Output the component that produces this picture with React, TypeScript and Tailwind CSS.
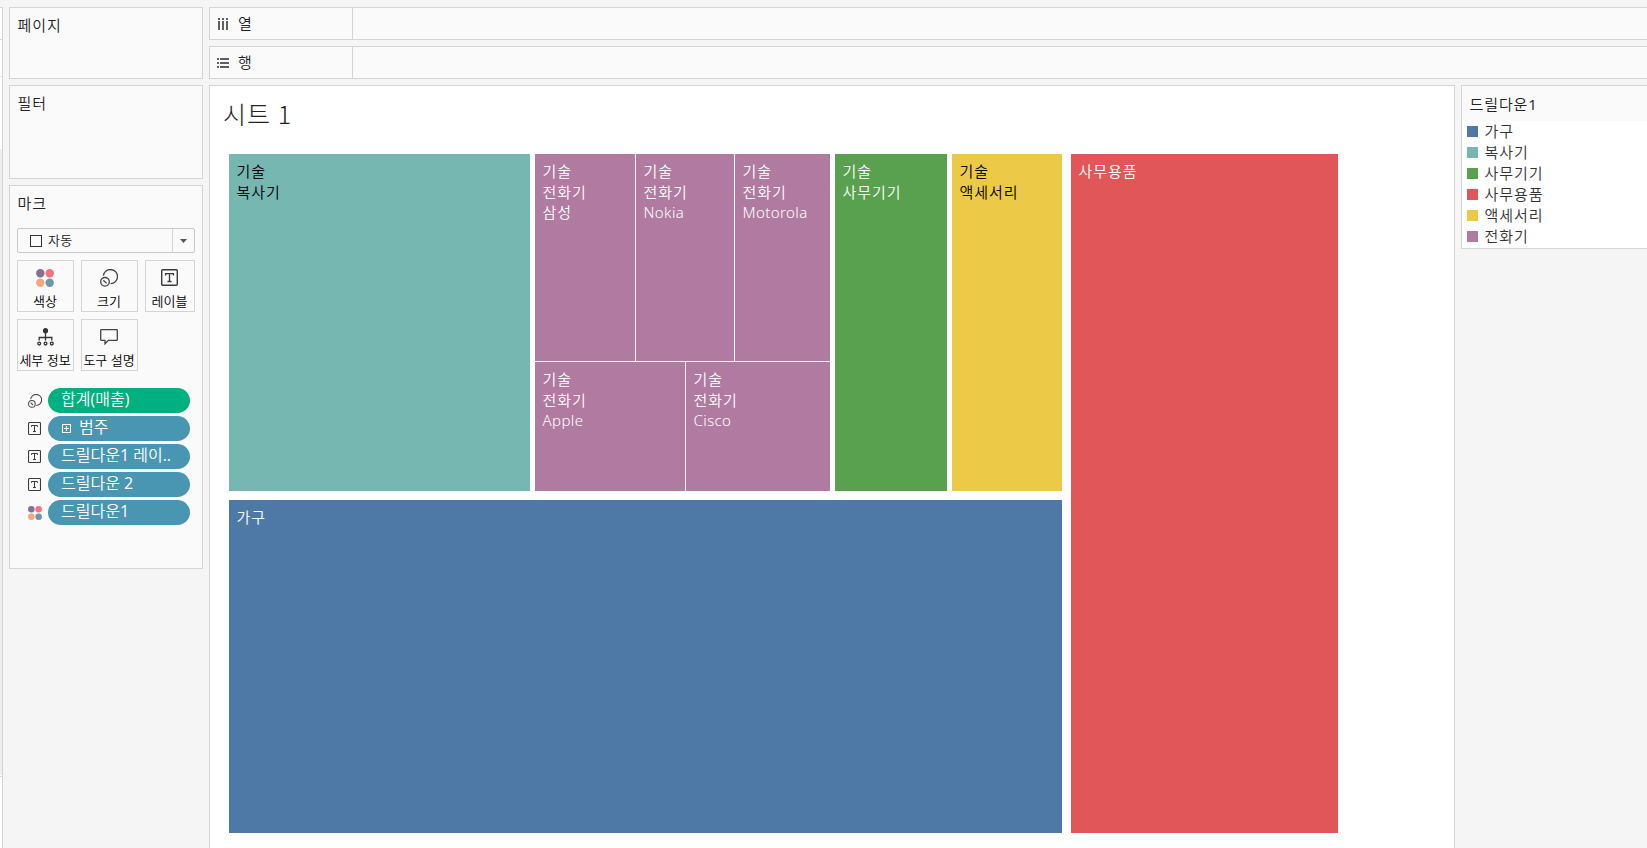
import React from "react";

const UI = "font-['Open_Sans','Noto_Sans_CJK_KR',sans-serif]";
const BOOK = "font-['Noto_Sans','Noto_Sans_CJK_KR',sans-serif]";

// Hangul is set in the demi-light weight; digits and punctuation keep the regular weight.
function Mixed({ text }: { text: string }) {
  return (
    <>
      {text.split(/([0-9().]+)/).map((part, i) =>
        i % 2 ? <span key={i} className="font-normal">{part}</span> : part
      )}
    </>
  );
}

function SizeIcon({ className }: { className: string }) {
  return (
    <svg viewBox="0 0 18 18" className={className} fill="none" stroke="#444" strokeWidth="1.3">
      <path d="M3.4 6.6a7.1 7.1 0 1 1 7.2 8.1" />
      <circle cx="5" cy="12.8" r="4.3" />
      <path d="M3.4 11.2l3.2 3.2" />
    </svg>
  );
}

function LabelIcon({ className }: { className: string }) {
  return (
    <svg viewBox="0 0 17 17" className={className} fill="none" stroke="#3a3a3a">
      <rect x="0.7" y="0.7" width="15.6" height="15.6" rx="1" strokeWidth="1.4" />
      <path d="M4.6 6.4V4.6h7.8v1.8M8.5 4.6v8M6.5 12.5h4" strokeWidth="1.3" />
    </svg>
  );
}

function ColorIcon({ className }: { className: string }) {
  return (
    <svg viewBox="0 0 18 18" className={className}>
      <circle cx="4.3" cy="4.3" r="4.2" fill="#867099" />
      <circle cx="13.7" cy="4.3" r="4.2" fill="#fb6f7e" />
      <circle cx="4.3" cy="13.7" r="4.2" fill="#f4a77c" />
      <circle cx="13.7" cy="13.7" r="4.2" fill="#6f97a6" />
    </svg>
  );
}

function DetailIcon({ className }: { className: string }) {
  return (
    <svg viewBox="0 0 17 18" className={className} fill="none" stroke="#333" strokeWidth="1.3">
      <circle cx="8.5" cy="2.7" r="2.6" fill="#333" stroke="none" />
      <path d="M8.5 4v8.5M2.2 12.5V9.5h12.6v3" />
      <circle cx="2.2" cy="15.6" r="1.4" />
      <circle cx="8.5" cy="15.6" r="1.4" />
      <circle cx="14.8" cy="15.6" r="1.4" />
    </svg>
  );
}

function TooltipIcon({ className }: { className: string }) {
  return (
    <svg viewBox="0 0 18 16" className={className} fill="none" stroke="#444" strokeWidth="1.3">
      <path d="M1.2.7h15.6q.5 0 .5.5v9.6q0 .5-.5.5H8.3L5 14.8v-3.5H1.2q-.5 0-.5-.5V1.2q0-.5.5-.5z" />
    </svg>
  );
}

function MarkButton({ label, width, children }: { label: string; width: string; children: React.ReactNode }) {
  return (
    <button className={`${width} flex h-[52px] flex-col items-center border border-[#d4d4d4] bg-[#fafafa] pr-px pt-[7px]`}>
      <span className="flex h-[19px] items-center">{children}</span>
      <span className="mt-[5px] whitespace-nowrap text-[13px] leading-[18px] text-black">{label}</span>
    </button>
  );
}

function Pill({ color, icon, label, expand }: { color: string; icon: React.ReactNode; label: string; expand?: boolean }) {
  return (
    <div className="flex h-[25px] items-center">
      <span className="flex w-[38px] items-center pl-[18px]">{icon}</span>
      <span className={`${color} flex h-[25px] w-[142px] items-center rounded-full pl-[13px] text-white`}>
        {expand && (
          <svg viewBox="0 0 9 9" className="ml-px mr-[8px] size-[9px]" fill="none" stroke="#fff">
            <rect x="0.5" y="0.5" width="8" height="8" />
            <path d="M2 4.5h5M4.5 2v5" />
          </svg>
        )}
        <span className="whitespace-nowrap pb-[3px] text-[16px] leading-[20px]"><Mixed text={label} /></span>
      </span>
    </div>
  );
}

function Shelf({ label, children }: { label: string; children: React.ReactNode }) {
  return (
    <div className="flex h-[33px] border border-r-0 border-[#d4d4d4] bg-[#fafafa]">
      <div className="flex w-[143px] items-center border-r border-[#d4d4d4] pl-[7px]">
        {children}
        <span className="ml-[8px] pb-px text-[15px] leading-[20px] text-[#222]">{label}</span>
      </div>
    </div>
  );
}

function Tile({ className, lines }: { className: string; lines: string[] }) {
  return (
    <div className={`${className} pl-[7.5px] pt-[7px]`}>
      {lines.map((line) => (
        <div
          key={line}
          className={`whitespace-nowrap text-[15px] leading-[20.6px] ${/[a-z]/i.test(line) ? "tracking-[0.4px]" : "tracking-[0.95px]"}`}
        >
          {line}
        </div>
      ))}
    </div>
  );
}

const legend = [
  { name: "가구", color: "bg-[#4e79a7]" },
  { name: "복사기", color: "bg-[#76b7b2]" },
  { name: "사무기기", color: "bg-[#59a14f]" },
  { name: "사무용품", color: "bg-[#e15759]" },
  { name: "액세서리", color: "bg-[#edc948]" },
  { name: "전화기", color: "bg-[#b07aa1]" },
];

export default function App() {
  return (
    <div className={`${UI} flex h-[848px] w-[1647px] overflow-hidden bg-[#f5f5f5] pt-[7px] font-[350]`}>
      <div className="flex w-[3px] flex-col border-r border-t border-[#d4d4d4] bg-white">
        <div className="h-8 border-b border-[#d4d4d4]" />
        <div className="h-[37px] border-b border-[#e4e4e4]" />
        <div className="h-[72px]" />
        <div className="h-[626px] bg-[#eeeeee]" />
        <div className="h-[2px] border-b border-[#d9d9d9]" />
      </div>

      <aside className="ml-[6px] flex w-[194px] flex-col gap-[6px] text-[#222]">
        <section className="h-[72px] border border-[#d4d4d4] bg-[#fafafa] pl-[7.5px] pt-[7px]">
          <h2 className="text-[15px] leading-[20px] tracking-[1px]">페이지</h2>
        </section>
        <section className="h-[94px] border border-[#d4d4d4] bg-[#fafafa] pl-[7.5px] pt-[7px]">
          <h2 className="text-[15px] leading-[20px] tracking-[1px]">필터</h2>
        </section>
        <section className="h-[384px] border border-[#d4d4d4] bg-[#fafafa] pl-[7px] pt-[7px]">
          <h2 className="pl-[0.5px] text-[15px] leading-[20px] tracking-[1px]">마크</h2>
          <div className="mt-[15px] flex h-[25px] w-[178px] items-center rounded-[2px] border border-[#c8c8c8]">
            <svg viewBox="0 0 12 12" className="ml-3 size-3" fill="none" stroke="#333"><rect x="0.5" y="0.5" width="11" height="11" /></svg>
            <span className="ml-[6px] pb-[2px] text-[13px] leading-[20px] tracking-[0.4px]">자동</span>
            <span className="ml-auto flex h-full w-[22px] items-center justify-center border-l border-[#d4d4d4]">
              <svg viewBox="0 0 7 4" className="h-1 w-[7px]"><path d="M0 0h7L3.5 4z" fill="#555" /></svg>
            </span>
          </div>
          <div className="mt-[7px] flex w-[178px] flex-wrap gap-[7px]">
            <MarkButton label="색상" width="w-[57px]"><ColorIcon className="size-[18px]" /></MarkButton>
            <MarkButton label="크기" width="w-[57px]"><SizeIcon className="size-[18px]" /></MarkButton>
            <MarkButton label="레이블" width="w-[50px]"><LabelIcon className="size-[17px]" /></MarkButton>
            <MarkButton label="세부 정보" width="w-[57px]"><DetailIcon className="h-[18px] w-[17px]" /></MarkButton>
            <MarkButton label="도구 설명" width="w-[57px]"><TooltipIcon className="h-4 w-[18px]" /></MarkButton>
          </div>
          <div className="-ml-[7px] mt-[17px] flex flex-col gap-[3px]">
            <Pill color="bg-[#00b180]" icon={<SizeIcon className="size-[14px]" />} label="합계(매출)" />
            <Pill color="bg-[#4996b2]" icon={<LabelIcon className="size-[13px]" />} label="범주" expand />
            <Pill color="bg-[#4996b2]" icon={<LabelIcon className="size-[13px]" />} label="드릴다운1 레이.." />
            <Pill color="bg-[#4996b2]" icon={<LabelIcon className="size-[13px]" />} label="드릴다운 2" />
            <Pill color="bg-[#4996b2]" icon={<ColorIcon className="size-[14px]" />} label="드릴다운1" />
          </div>
        </section>
      </aside>

      <div className="ml-[6px] flex w-[1438px] flex-col gap-[6px]">
        <Shelf label="열">
          <svg viewBox="0 0 12 12" className="ml-px size-3" fill="#5f5f5f">
            <path d="M0 0h2v2H0zM4 0h2v2H4zM8 0h2v2H8zM0 3h2v9H0zM4 3h2v9H4zM8 3h2v9H8z" />
          </svg>
        </Shelf>
        <Shelf label="행">
          <svg viewBox="0 0 12 10" className="mr-px h-[10px] w-3" fill="#5f5f5f">
            <path d="M0 0h2v2H0zM0 4h2v2H0zM0 8h2v2H0zM3 0h9v2H3zM3 4h9v2H3zM3 8h9v2H3z" />
          </svg>
        </Shelf>
        <div className="flex h-[763px] gap-[6px]">
          <main className={`${BOOK} w-[1246px] border border-b-0 border-[#d4d4d4] bg-white`}>
            <h1 className="h-[68px] pl-[13px] pt-[9px] font-['Noto_Sans_CJK_KR',sans-serif] text-[25px] font-light leading-[36px] tracking-[1.1px] text-[#222]">시트 1</h1>
            <div className="ml-[19px] flex h-[679px] gap-[9px] text-white">
              <div className="flex w-[833px] flex-col gap-[9px]">
                <div className="flex h-[337px] gap-[5px]">
                  <Tile className="w-[301px] bg-[#76b7b2] text-black" lines={["기술", "복사기"]} />
                  <div className="flex w-[295px] flex-col gap-px">
                    <div className="flex h-[207px] gap-px">
                      <Tile className="w-[100px] bg-[#b07aa1]" lines={["기술", "전화기", "삼성"]} />
                      <Tile className="w-[98px] bg-[#b07aa1]" lines={["기술", "전화기", "Nokia"]} />
                      <Tile className="w-[95px] bg-[#b07aa1]" lines={["기술", "전화기", "Motorola"]} />
                    </div>
                    <div className="flex h-[129px] gap-px">
                      <Tile className="w-[150px] bg-[#b07aa1]" lines={["기술", "전화기", "Apple"]} />
                      <Tile className="w-[144px] bg-[#b07aa1]" lines={["기술", "전화기", "Cisco"]} />
                    </div>
                  </div>
                  <Tile className="w-[112px] bg-[#59a14f]" lines={["기술", "사무기기"]} />
                  <Tile className="w-[110px] bg-[#edc948] text-black" lines={["기술", "액세서리"]} />
                </div>
                <Tile className="h-[333px] bg-[#4e79a7]" lines={["가구"]} />
              </div>
              <Tile className="w-[267px] bg-[#e15759]" lines={["사무용품"]} />
            </div>
          </main>
          <aside className="h-[164px] w-[186px] border border-r-0 border-[#d4d4d4] bg-white text-[#222]">
            <h2 className="h-[35px] bg-[#fafafa] pl-[7.5px] pt-[8px] text-[15px] leading-[20px] tracking-[0.9px]"><Mixed text="드릴다운1" /></h2>
            <ul className={BOOK}>
              {legend.map((item) => (
                <li key={item.name} className="flex h-[21px] items-center pl-[5px]">
                  <span className={`${item.color} size-[11px]`} />
                  <span className="ml-[6.5px] text-[15px] leading-[21px] tracking-[0.95px] text-[#333]">{item.name}</span>
                </li>
              ))}
            </ul>
          </aside>
        </div>
      </div>
    </div>
  );
}
